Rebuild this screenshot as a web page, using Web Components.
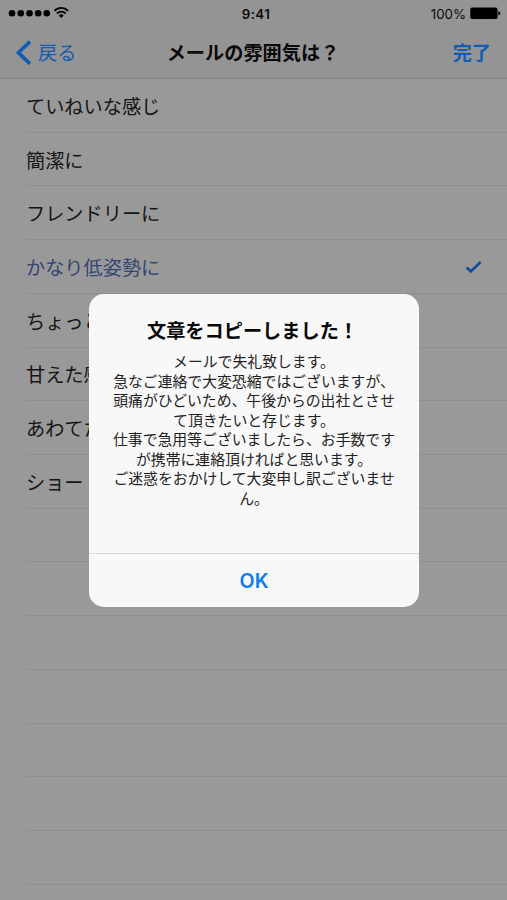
<!DOCTYPE html>
<html lang="ja"><head><meta charset="utf-8"><title>メールの雰囲気は？</title>
<style>
html,body{margin:0;height:100%}
body{font-family:"Liberation Sans","Noto Sans CJK JP",sans-serif;background:#999;overflow:hidden}
</style></head><body>
<mail-app></mail-app>
<script>
const define=(name,html)=>customElements.define(name,class extends HTMLElement{
  constructor(){super();this.attachShadow({mode:'open'}).innerHTML=html;}
});

define('status-bar',`<style>
:host{display:grid;grid-template-columns:1fr auto 1fr;align-items:center;height:27px;padding:0 6px 0 8px;color:#0b0b0b;font:13.3px/25px Inter,sans-serif}
svg{display:block}
span{padding-top:2px}
.time{font-weight:600;letter-spacing:.45px;padding-left:3px}
.right{display:flex;justify-content:flex-end;align-items:center;gap:4px;padding-top:0}
</style>
<svg width="64" height="27" viewBox="0 0 64 27"><g fill="#000"><circle cx="4" cy="13.2" r="3.3"/><circle cx="12.8" cy="13.2" r="3.3"/><circle cx="21.5" cy="13.2" r="3.3"/><circle cx="30.2" cy="13.2" r="3.3"/><circle cx="38.8" cy="13.2" r="3.3"/><path d="M50.9 15.4a3.4 3.4 0 0 1 4.8 0L53.3 18z"/></g><g fill="none" stroke="#000" stroke-width="1.8"><path d="M46.4 10.8a9.8 9.8 0 0 1 13.8 0"/><path d="M48.9 13.5a6.2 6.2 0 0 1 8.8 0"/></g></svg>
<span class="time">9:41</span>
<span class="right"><span>100%</span><svg width="31" height="27" viewBox="0 0 31 27"><rect x="0.3" y="7.6" width="27.2" height="11.4" rx="1.8"/><path d="M28.3 11.2q2 .5 2 2.1t-2 2.1z"/></svg></span>`);

define('nav-bar',`<style>
:host{display:grid;grid-template-columns:1fr auto 1fr;align-items:center;height:51px;padding:0 16px;border-bottom:1px solid #868686;font-size:19.2px;line-height:51px;color:#0a0a0a}
.back{display:flex;align-items:center;gap:6px;color:#145cb2}
.title,.done{font-weight:700;padding-top:1px}
.title{margin-left:-1px}
slot[name=back]{display:block;padding-top:1px}
.done{text-align:right;color:#145cb2}
</style>
<span class="back"><svg width="16" height="26" viewBox="0 0 16 26"><path d="M14 1.6 2.4 12.7 14 23.8" fill="none" stroke="#145cb2" stroke-width="3.7"/></svg><slot name="back"></slot></span>
<span class="title"><slot></slot></span><span class="done"><slot name="done"></slot></span>`);

define('list-row',`<style>
:host{display:flex;align-items:center;justify-content:space-between;box-sizing:border-box;height:53.72px;margin-left:26px;padding-right:25px;border-bottom:1px solid #8e8e8e;font-size:19.2px;line-height:28px;color:#151515;white-space:nowrap}
:host([selected]){color:#34466f}
.label{padding-top:5px}
svg{display:none}:host([selected]) svg{display:block}
</style><span class="label"><slot></slot></span><svg width="17" height="14" viewBox="0 0 17 14"><path d="M1.6 7.5 5.8 11.5 15.6 2" fill="none" stroke="#0a4c9e" stroke-width="2.5"/></svg>`);

define('alert-dialog',`<style>
:host{position:absolute;left:89px;top:294px;width:330px;height:312.5px;display:flex;flex-direction:column;background:#f8f8f8;border-radius:15px;overflow:hidden;text-align:center}
.title{padding:24px 3px 0 0;font-size:19.2px;line-height:28px;font-weight:700;color:#080808}
.body{flex:1;padding:7px 0 0 0;font-size:14.85px;line-height:19.55px;color:#222;white-space:nowrap}
.actions{height:52.5px;border-top:1px solid #d8d8d8;color:#087cf5}
</style><div class="title"><slot name="title"></slot></div><div class="body"><slot></slot></div><div class="actions"><slot name="action"></slot></div>`);

define('alert-button',`<style>:host{display:block;font:600 19.6px/55px Inter,sans-serif}</style><slot></slot>`);

define('mail-app',`<style>
:host{display:block;position:relative;width:507px;height:900px;overflow:hidden;background:#999}
header{background:#949494}
</style>
<header><status-bar></status-bar><nav-bar><span slot="back">戻る</span>メールの雰囲気は？<span slot="done">完了</span></nav-bar></header>
<main><list-row>ていねいな感じ</list-row><list-row>簡潔に</list-row><list-row>フレンドリーに</list-row><list-row selected>かなり低姿勢に</list-row><list-row>ちょっと</list-row><list-row>甘えた感じ</list-row><list-row>あわてた</list-row><list-row>ショート</list-row><list-row></list-row><list-row></list-row><list-row></list-row><list-row></list-row><list-row></list-row><list-row></list-row><list-row></list-row></main>
<alert-dialog><span slot="title">文章をコピーしました！</span>メールで失礼致します。<br>急なご連絡で大変恐縮ではございますが、<br>頭痛がひどいため、午後からの出社とさせ<br>て頂きたいと存じます。<br>仕事で急用等ございましたら、お手数です<br>が携帯に連絡頂ければと思います。<br>ご迷惑をおかけして大変申し訳ございませ<br>ん。<alert-button slot="action">OK</alert-button></alert-dialog>`);
</script></body></html>
